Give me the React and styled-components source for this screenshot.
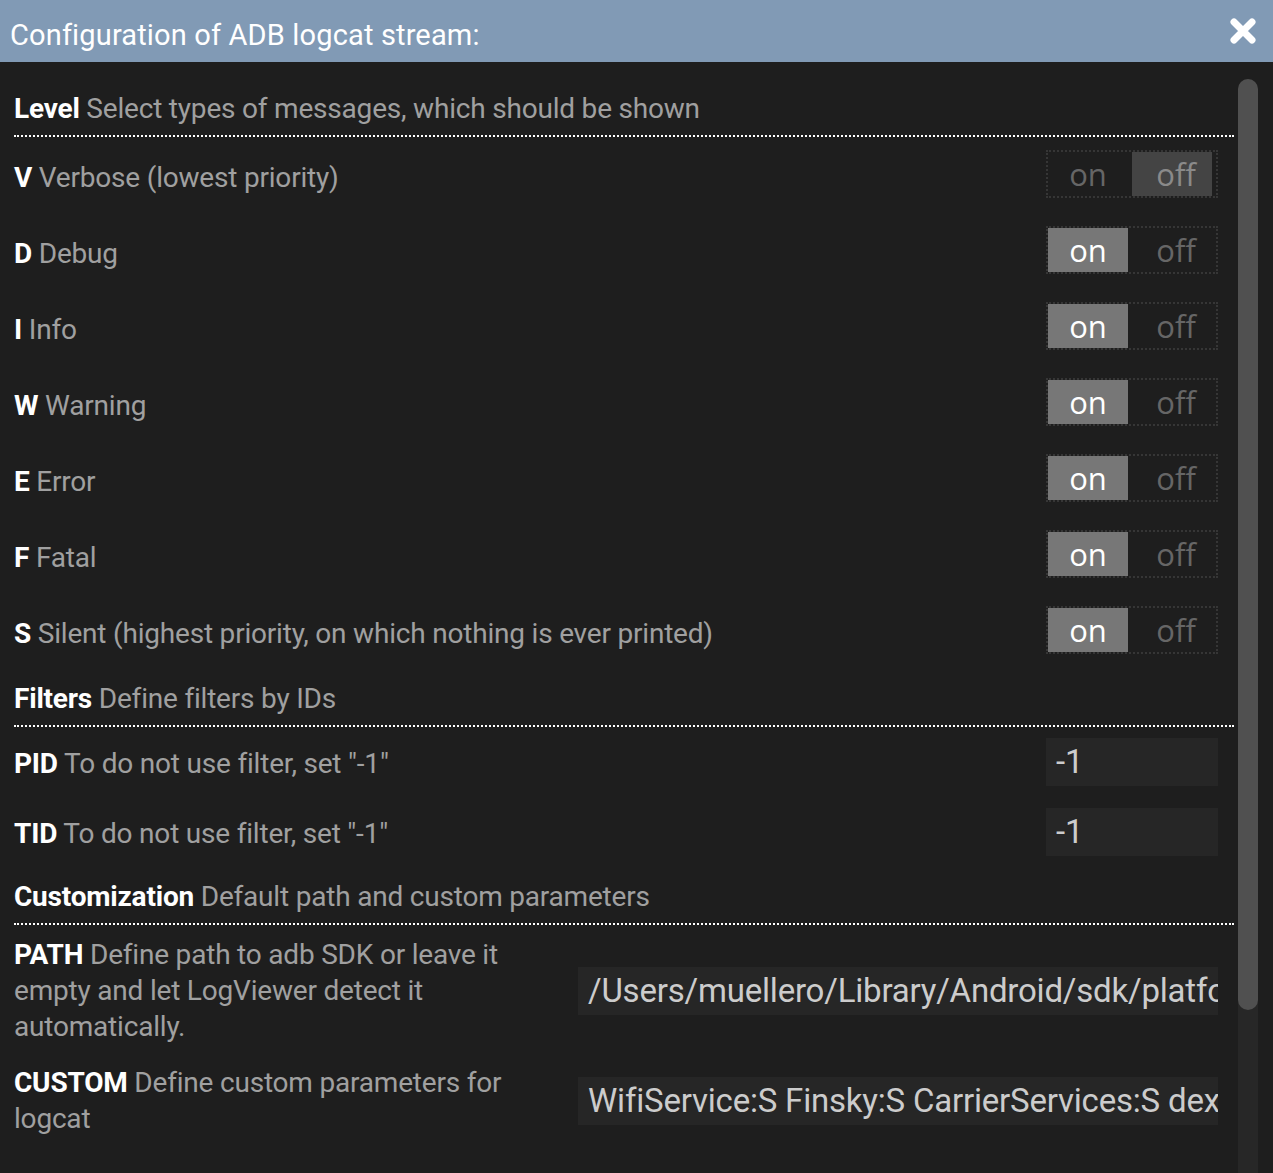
import React from "react";
import styled, { createGlobalStyle } from "styled-components";

const levels = [
  { key: "V", text: "Verbose (lowest priority)", on: false },
  { key: "D", text: "Debug", on: true },
  { key: "I", text: "Info", on: true },
  { key: "W", text: "Warning", on: true },
  { key: "E", text: "Error", on: true },
  { key: "F", text: "Fatal", on: true },
  { key: "S", text: "Silent (highest priority, on which nothing is ever printed)", on: true },
];

const Toggle = ({ on }) => (
  <Switch>
    <SwitchCell active={on} kind="on">on</SwitchCell>
    <SwitchCell active={!on} kind="off">off</SwitchCell>
  </Switch>
);

const CloseIcon = () => (
  <svg width="26" height="26" viewBox="0 0 26 26">
    <path d="M4 4 L22 22 M22 4 L4 22" stroke="#fff" strokeWidth="7" strokeLinecap="round" />
  </svg>
);

const App = () => {
  return (
    <>
      <GlobalStyle />
      <Dialog>
        <Header>
          <HeaderTitle>Configuration of ADB logcat stream:</HeaderTitle>
          <CloseButton><CloseIcon /></CloseButton>
        </Header>
        <Body>
          <Content>
            <SectionHeader>
              <Strong>Level</Strong> Select types of messages, which should be shown
            </SectionHeader>
            {levels.map((l) => (
              <Row key={l.key}>
                <Label shift={8}><Strong>{l.key}</Strong> {l.text}</Label>
                <Toggle on={l.on} />
              </Row>
            ))}

            <SectionHeader>
              <Strong>Filters</Strong> Define filters by IDs
            </SectionHeader>
            <InputRow>
              <Label shift={4}><Strong>PID</Strong> To do not use filter, set "-1"</Label>
              <SmallInput>-1</SmallInput>
            </InputRow>
            <InputRow>
              <Label shift={4}><Strong>TID</Strong> To do not use filter, set "-1"</Label>
              <SmallInput>-1</SmallInput>
            </InputRow>

            <SectionHeader>
              <Strong>Customization</Strong> Default path and custom parameters
            </SectionHeader>
            <TextRow>
              <WrapLabel><Strong>PATH</Strong> Define path to adb SDK or leave it empty and let LogViewer detect it automatically.</WrapLabel>
              <WideInput>/Users/muellero/Library/Android/sdk/platform-tools/adb</WideInput>
            </TextRow>
            <TextRow>
              <WrapLabel><Strong>CUSTOM</Strong> Define custom parameters for logcat</WrapLabel>
              <WideInput>WifiService:S Finsky:S CarrierServices:S dex2oat:S</WideInput>
            </TextRow>
          </Content>
          <ScrollTrack>
            <ScrollThumb />
          </ScrollTrack>
        </Body>
      </Dialog>
    </>
  );
};

export default App;

const GlobalStyle = createGlobalStyle`
  html, body {
    margin: 0;
    padding: 0;
    height: 100%;
    background: #1e1e1e;
  }
  #root {
    height: 100%;
  }
`

const Dialog = styled.div`
  display: flex;
  flex-direction: column;
  height: 100vh;
  background: #1e1e1e;
  font-family: Roboto, "Liberation Sans", sans-serif;
  overflow: hidden;
`
const Header = styled.div`
  flex: 0 0 62px;
  display: flex;
  align-items: center;
  justify-content: space-between;
  padding: 0 17px 0 10px;
  background: #819ab5;
`
const HeaderTitle = styled.div`
  color: #fff;
  font-size: 29px;
  letter-spacing: 0.15px;
  margin-top: 7px;
`
const CloseButton = styled.div`
  display: flex;
  margin-top: -1px;
  cursor: pointer;
`
const Body = styled.div`
  flex: 1;
  display: flex;
  min-height: 0;
  padding-right: 15px;
`
const Content = styled.div`
  flex: 1;
  display: flex;
  flex-direction: column;
  padding: 17px 4px 0 14px;
`
const ScrollTrack = styled.div`
  flex: 0 0 20px;
  margin-top: 17px;
  background: #272727;
  border-radius: 10px 10px 0 0;
  display: flex;
  flex-direction: column;
`
const ScrollThumb = styled.div`
  height: 931px;
  background: #505050;
  border-radius: 10px;
`
const SectionHeader = styled.div`
  padding: 12px 0 8px;
  line-height: 36px;
  font-size: 28px;
  color: #a0a0a0;
  border-bottom: 2px dotted #fff;
  letter-spacing: -0.2px;
`
const Strong = styled.span`
  color: #fff;
  font-weight: 700;
`
const Row = styled.div`
  display: flex;
  align-items: center;
  justify-content: space-between;
  padding: 13px 16px 15px 0;
`
const InputRow = styled(Row)`
  padding: 11px 16px 11px 0;
`
const TextRow = styled(Row)`
  padding: 12px 16px 8px 0;
`
const Label = styled.div`
  font-size: 28px;
  line-height: 36px;
  color: #a0a0a0;
  letter-spacing: -0.2px;
  margin-top: ${(p) => p.shift || 0}px;
`
const WrapLabel = styled(Label)`
  width: 530px;
`
const Switch = styled.div`
  display: flex;
  width: 168px;
  height: 44px;
  border: 2px dotted #363636;
`
const SwitchCell = styled.div`
  width: 80px;
  height: 44px;
  margin-right: 4px;
  box-sizing: border-box;
  padding-left: ${(p) => (p.kind === "off" ? "8px" : "0")};
  display: flex;
  align-items: center;
  justify-content: center;
  font-family: "Open Sans", sans-serif;
  font-size: 31px;
  background: ${(p) => (p.active ? (p.kind === "on" ? "#777" : "#444") : "transparent")};
  color: ${(p) => (p.active ? (p.kind === "on" ? "#fff" : "#8a8a8a") : "#666")};
`
const InputBox = styled.div`
  height: 48px;
  box-sizing: border-box;
  padding: 0 10px;
  background: #262626;
  color: #cccccc;
  font-size: 33px;
  line-height: 48px;
  letter-spacing: -0.2px;
  white-space: nowrap;
  overflow: hidden;
`
const SmallInput = styled(InputBox)`
  width: 172px;
`
const WideInput = styled(InputBox)`
  width: 640px;
`
